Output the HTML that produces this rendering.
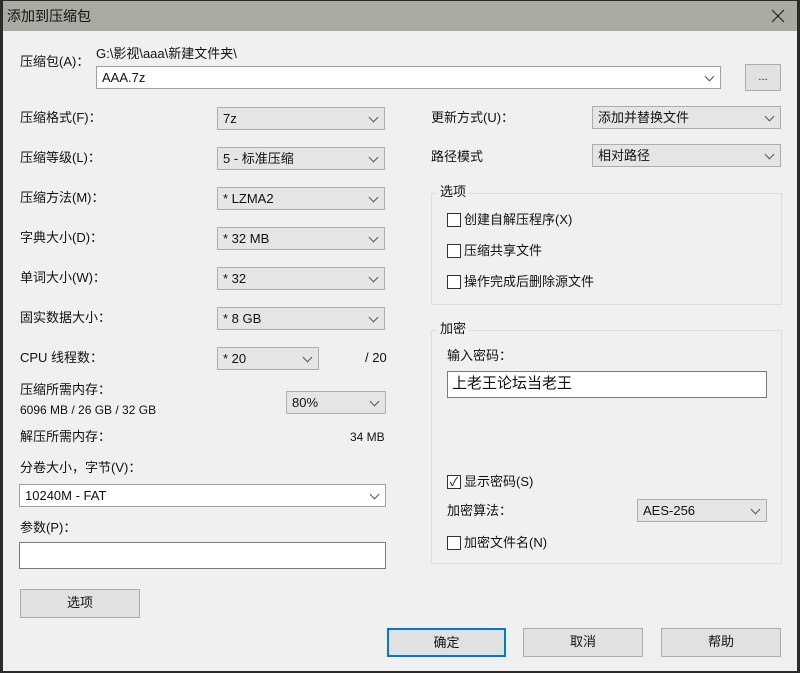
<!DOCTYPE html>
<html><head><meta charset="utf-8"><style>
*{box-sizing:border-box;margin:0;padding:0}
body{width:800px;height:673px;background:#2b2b2b;position:relative;overflow:hidden;font-family:"Liberation Sans","Noto Sans CJK SC",sans-serif;font-size:13px;color:#111}
#win{position:absolute;left:3px;top:1px;width:794px;height:670px;background:#f0f0f0}
#title{position:absolute;left:0;top:0;width:794px;height:30px;background:#aaaaa2}
.a{position:absolute;white-space:nowrap;line-height:16px}
.cb{position:absolute;height:23px;background:#e5e5e5;border:1px solid #adadad;padding-left:5px;line-height:21px}
.cb.w{background:#fff;border-color:#a0a0a0}
.cb:after{content:"";position:absolute;right:7px;top:6px;width:6px;height:6px;border-right:1px solid #555;border-bottom:1px solid #555;transform:rotate(45deg)}
.in{position:absolute;background:#fff;border:1px solid #7a7a7a;padding-left:4px}
.bt{position:absolute;background:#e1e1e1;border:1px solid #adadad;text-align:center;line-height:26px}
.gb{position:absolute;border:1px solid #dcdcdc}
.gl{position:absolute;background:#f0f0f0;padding:0 3px;line-height:16px}
.ck{position:absolute;width:14px;height:14px;border:1px solid #333;background:#fff}
</style></head><body>
<div id="win">
<div id="title"></div>
<div class="a" style="left:4px;top:7px;font-size:14px">添加到压缩包</div>
<svg style="position:absolute;left:768px;top:8px" width="14" height="14"><path d="M1 1L13 13M13 1L1 13" stroke="#222" stroke-width="1.2"/></svg>

<div class="a" style="left:17px;top:53px">压缩包(A)：</div>
<div class="a" style="left:93px;top:45px">G:\影视\aaa\新建文件夹\</div>
<div class="cb w" style="left:93px;top:65px;width:625px;line-height:21px">AAA.7z</div>
<div class="bt" style="left:742px;top:63px;width:36px;height:27px;line-height:24px;font-size:11px">...</div>

<div class="a" style="left:17px;top:109px">压缩格式(F)：</div><div class="cb" style="left:214px;top:106px;width:168px">7z</div>
<div class="a" style="left:17px;top:149px">压缩等级(L)：</div><div class="cb" style="left:214px;top:146px;width:168px">5 - 标准压缩</div>
<div class="a" style="left:17px;top:189px">压缩方法(M)：</div><div class="cb" style="left:214px;top:186px;width:168px">* LZMA2</div>
<div class="a" style="left:17px;top:229px">字典大小(D)：</div><div class="cb" style="left:214px;top:226px;width:168px">* 32 MB</div>
<div class="a" style="left:17px;top:269px">单词大小(W)：</div><div class="cb" style="left:214px;top:266px;width:168px">* 32</div>
<div class="a" style="left:17px;top:309px">固实数据大小：</div><div class="cb" style="left:214px;top:306px;width:168px">* 8 GB</div>
<div class="a" style="left:17px;top:349px">CPU 线程数：</div><div class="cb" style="left:214px;top:346px;width:102px">* 20</div>
<div class="a" style="left:362px;top:349px">/ 20</div>
<div class="a" style="left:17px;top:381px">压缩所需内存：</div>
<div class="a" style="left:17px;top:401px;font-size:12px">6096 MB / 26 GB / 32 GB</div>
<div class="cb" style="left:283px;top:390px;width:100px">80%</div>
<div class="a" style="left:17px;top:428px">解压所需内存：</div>
<div class="a" style="left:347px;top:428px;font-size:12px">34 MB</div>
<div class="a" style="left:17px;top:459px">分卷大小，字节(V)：</div>
<div class="cb w" style="left:16px;top:483px;width:367px">10240M - FAT</div>
<div class="a" style="left:17px;top:519px">参数(P)：</div>
<div class="in" style="left:16px;top:541px;width:367px;height:27px"></div>
<div class="bt" style="left:17px;top:588px;width:120px;height:29px">选项</div>

<div class="a" style="left:428px;top:109px">更新方式(U)：</div><div class="cb" style="left:589px;top:105px;width:189px">添加并替换文件</div>
<div class="a" style="left:428px;top:148px">路径模式</div><div class="cb" style="left:589px;top:143px;width:189px">相对路径</div>

<div class="gb" style="left:428px;top:192px;width:351px;height:112px"></div>
<div class="gl" style="left:434px;top:183px">选项</div>
<div class="ck" style="left:444px;top:212px"></div><div class="a" style="left:461px;top:211px">创建自解压程序(X)</div>
<div class="ck" style="left:444px;top:243px"></div><div class="a" style="left:461px;top:242px">压缩共享文件</div>
<div class="ck" style="left:444px;top:274px"></div><div class="a" style="left:461px;top:273px">操作完成后删除源文件</div>

<div class="gb" style="left:428px;top:329px;width:351px;height:234px"></div>
<div class="gl" style="left:434px;top:320px">加密</div>
<div class="a" style="left:444px;top:347px">输入密码：</div>
<div class="in" style="left:444px;top:370px;width:320px;height:27px;font-size:15px;line-height:24px">上老王论坛当老王</div>
<div class="ck" style="left:444px;top:474px;font-size:12px;line-height:12px;text-align:center">✓</div><div class="a" style="left:461px;top:473px">显示密码(S)</div>
<div class="a" style="left:444px;top:502px">加密算法：</div>
<div class="cb" style="left:634px;top:498px;width:130px">AES-256</div>
<div class="ck" style="left:444px;top:535px"></div><div class="a" style="left:461px;top:534px">加密文件名(N)</div>

<div class="bt" style="left:384px;top:627px;width:119px;height:29px;border:2px solid #0078d7;line-height:25px">确定</div>
<div class="bt" style="left:520px;top:627px;width:120px;height:29px">取消</div>
<div class="bt" style="left:658px;top:627px;width:120px;height:29px">帮助</div>
</div>
</body></html>
